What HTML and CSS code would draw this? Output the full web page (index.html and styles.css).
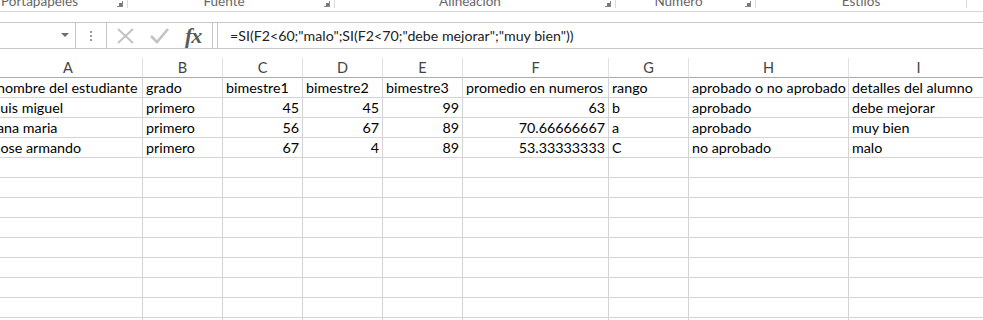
FILE: index.html
```html
<!DOCTYPE html>
<html lang="es">
<head>
    <meta charset="UTF-8">
    <title>Libro1 - Excel</title>
    <link rel="stylesheet" href="styles.css">
</head>
<body>
    <div class="ribbon">
        <div class="group g1"><span>Portapapeles</span><i class="launcher"></i></div>
        <div class="group g2"><span>Fuente</span><i class="launcher"></i></div>
        <div class="group g3"><span>Alineación</span><i class="launcher"></i></div>
        <div class="group g4"><span>Número</span><i class="launcher"></i></div>
        <div class="group g5"><span>Estilos</span></div>
    </div>

    <div class="formula-bar">
        <div class="name-box"><span class="arrow"></span></div>
        <div class="dots"><i></i><i></i><i></i></div>
        <div class="buttons">
            <svg class="btn" width="20" height="18" viewBox="0 0 20 18">
                <path d="M2 2 L17 16 M17 2 L2 16" stroke="#c3c3c3" stroke-width="2" fill="none"/>
            </svg>
            <svg class="btn" width="20" height="18" viewBox="0 0 20 18">
                <path d="M1 9 L7 15 L18 2" stroke="#c3c3c3" stroke-width="2.6" fill="none"/>
            </svg>
            <span class="fx">fx</span>
        </div>
        <div class="formula">=SI(F2&lt;60;"malo";SI(F2&lt;70;"debe mejorar";"muy bien"))</div>
    </div>

    <div class="sheet-wrap">
        <div class="sheet" id="sheet"></div>
    </div>

    <script>
        const cols = ['A', 'B', 'C', 'D', 'E', 'F', 'G', 'H', 'I'];
        // los numeros se alinean a la derecha
        const rows = [
            ['nombre del estudiante', 'grado', 'bimestre1', 'bimestre2', 'bimestre3', 'promedio en numeros', 'rango', 'aprobado o no aprobado', 'detalles del alumno'],
            ['luis miguel', 'primero', 45, 45, 99, 63, 'b', 'aprobado', 'debe mejorar'],
            ['ana maria', 'primero', 56, 67, 89, '70.66666667', 'a', 'aprobado', 'muy bien'],
            ['jose armando', 'primero', 67, 4, 89, '53.33333333', 'C', 'no aprobado', 'malo']
        ];

        const sheet = document.getElementById('sheet');
        cols.forEach(c => {
            const h = document.createElement('div');
            h.className = 'col-head';
            h.textContent = c;
            sheet.appendChild(h);
        });

        for (let r = 0; r < 13; r++) {
            for (let c = 0; c < cols.length; c++) {
                const cell = document.createElement('div');
                cell.className = 'cell';
                const v = rows[r] ? rows[r][c] : '';
                if (typeof v === 'number' || /^\d+\.\d+$/.test(v)) {
                    cell.classList.add('num');
                }
                cell.textContent = v;
                sheet.appendChild(cell);
            }
        }
    </script>
</body>
</html>
```

FILE: styles.css
```css
body {
    margin: 0;
    background: #fff;
    font-family: Lato, "Open Sans", sans-serif;
    overflow: hidden;
    width: 983px;
    height: 320px;
}

/* cinta de opciones */
.ribbon {
    display: flex;
    height: 11px;
    border-bottom: 1px solid #d5d5d5;
    background: #fff;
    overflow: hidden;
}
.group {
    position: relative;
    height: 8px;
    border-right: 1px solid #dadada;
    text-align: center;
    font-size: 13.5px;
    color: #666;
    line-height: 1;
    box-sizing: border-box;
}
.group span {
    position: relative;
    top: -5px;
}
.g1 { width: 128px; padding-right: 48px; }
.g2 { width: 207px; padding-right: 14px; }
.g3 { width: 281px; padding-right: 10px; }
.g4 { width: 140px; padding-right: 14px; }
.g5 { width: 211px; }
.launcher {
    position: absolute;
    right: 4px;
    top: 1px;
    width: 5px;
    height: 5px;
    border: 1px solid #888;
    border-top: none;
    border-left: none;
}
.launcher::after {
    content: '';
    position: absolute;
    right: 0;
    bottom: 0;
    width: 3px;
    height: 3px;
    background: #777;
}

/* barra de formulas */
.formula-bar {
    display: flex;
    align-items: stretch;
    height: 25px;
    margin-top: 10px;
    border-top: 1px solid #c6c6c6;
    border-bottom: 1px solid #c6c6c6;
}
.name-box {
    position: relative;
    width: 75px;
    border-right: 1px solid #c6c6c6;
}
.name-box .arrow {
    position: absolute;
    left: 61px;
    top: 10px;
    border-left: 4px solid transparent;
    border-right: 4px solid transparent;
    border-top: 4px solid #6d6d6d;
}
.dots {
    width: 30px;
    display: flex;
    flex-direction: column;
    align-items: center;
    justify-content: center;
    gap: 2px;
}
.dots i {
    display: block;
    width: 2px;
    height: 2px;
    background: #9a9a9a;
}
.buttons {
    width: 107px;
    border-left: 1px solid #c6c6c6;
    border-right: 1px solid #c6c6c6;
    display: flex;
    align-items: center;
    padding-left: 9px;
    gap: 14px;
    box-sizing: border-box;
}
.fx {
    font-family: "Liberation Serif", serif;
    font-style: italic;
    font-weight: bold;
    font-size: 22px;
    color: #5a5a5a;
    margin-left: 1px;
    letter-spacing: -1px;
    line-height: 1;
}
.formula {
    flex: 1;
    margin-left: 4px;
    border-left: 1px solid #c6c6c6;
    padding-left: 12px;
    font-size: 14.2px;
    line-height: 25px;
    color: #222;
    white-space: nowrap;
}

/* hoja */
.sheet-wrap {
    height: 263px;
    overflow: hidden;
    margin-top: 9px;
}
.sheet {
    display: grid;
    grid-template-columns: 149px 80px 80px 80px 80px 146px 80px 160px 140px;
    grid-auto-rows: 20px;
    margin-left: -6px;
}
.col-head {
    border-right: 1px solid #e1e1e1;
    border-bottom: 1px solid #ababab;
    text-align: center;
    font-size: 14.5px;
    line-height: 20px;
    color: #444;
}
.cell {
    border-right: 1px solid #d4d4d4;
    border-bottom: 1px solid #d4d4d4;
    font-size: 14.3px;
    line-height: 20px;
    padding: 0 3px;
    color: #000;
    white-space: nowrap;
    overflow: hidden;
}
.cell.num {
    text-align: right;
}
```
